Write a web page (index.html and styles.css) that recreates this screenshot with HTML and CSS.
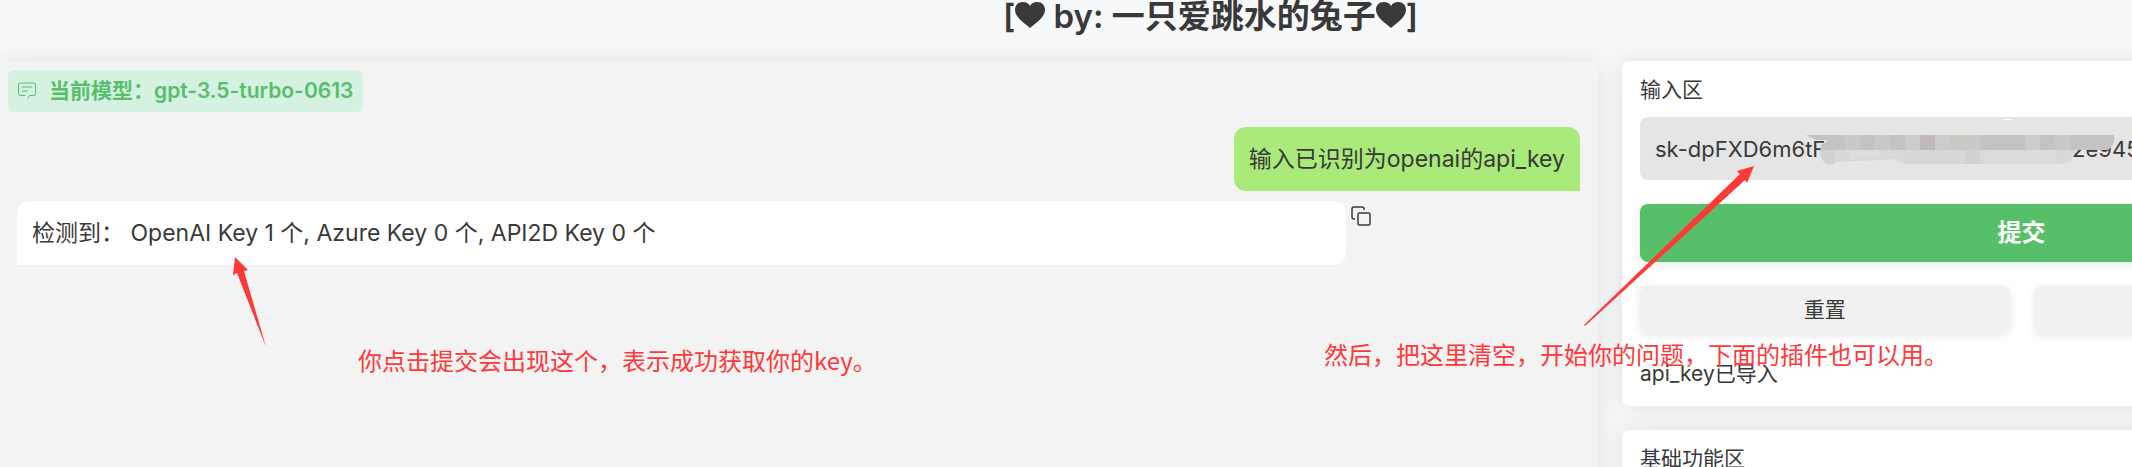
FILE: index.html
```html
<!DOCTYPE html>
<html lang="zh">
<head>
  <meta charset="UTF-8">
  <meta name="viewport" content="width=device-width, initial-scale=1.0">
  <title>by: 一只爱跳水的兔子</title>
  <link rel="stylesheet" href="styles.css">
</head>
<body>
  <div class="app">
    <h1>[<svg class="heart" viewBox="0 0 30 26" aria-hidden="true"><path d="M15 26C9 21 0 15 0 8C0 3 3 0 8 0C11 0 13.500 1 15 4C16.500 1 19 0 22 0C27 0 30 3 30 8C30 15 21 21 15 26Z"/></svg> by: 一只爱跳水的兔子<svg class="heart" viewBox="0 0 30 26" aria-hidden="true"><path d="M15 26C9 21 0 15 0 8C0 3 3 0 8 0C11 0 13.500 1 15 4C16.500 1 19 0 22 0C27 0 30 3 30 8C30 15 21 21 15 26Z"/></svg>]</h1>

    <main class="layout">
      <section class="chat">
        <div class="chat-label">
          <svg class="chat-icon" viewBox="0 0 18 18" aria-hidden="true"><path d="M10 16.500L11.500 13.500H15.500Q17.500 13.500 17.500 11.500V3Q17.500 1 15.500 1H2.500Q.500 1 .500 3V11.500Q.500 13.500 2.500 13.500H7.500M4 5H14M4 9H10"/></svg>
          当前模型：gpt-3.5-turbo-0613
        </div>
        <div class="messages">
          <div class="message user-message">输入已识别为openai的api_key</div>
          <div class="bot-row">
            <div class="message bot-message">检测到： OpenAI Key 1 个, Azure Key 0 个, API2D Key 0 个</div>
            <button class="copy-button" aria-label="复制">
              <svg viewBox="0 0 20 20" aria-hidden="true"><rect x="7" y="7" width="12" height="12" rx="1.500"/><path d="M4 13H3Q1 13 1 11V3Q1 1 3 1H11Q13 1 13 3V4"/></svg>
            </button>
          </div>
        </div>
      </section>

      <aside class="sidebar">
        <section class="panel">
          <label class="panel-title" for="prompt">输入区</label>
          <div class="key-field">
            <input type="text" id="prompt" value="sk-dpFXD6m6tF0000000m00000000m2e945">
            <!-- Mosaic over the middle of the key -->
            <svg class="mosaic" viewBox="0 0 320 50" aria-hidden="true">
              <path fill="#c3c3c3" d="M6 18H122L122 33H20L22 27L27 25V23H16Z"/>
              <path fill="#c9c9c8" d="M45 18H60V33H45ZM75 18H90V33H75Z"/>
              <path fill="#c3c3c3" d="M120 18H314Q316 27 308 33H120Z"/>
              <path fill="#cbcdcd" d="M105 18H120V33H105ZM135 18H150V33H135ZM225 18H240V33H225Z"/>
              <path fill="#bfbab8" d="M120 18H135V33H120Z"/>
              <path fill="#c9c9c6" d="M150 18H180V33H150ZM255 18H270V33H255Z"/>
              <path fill="#d8d8d8" d="M20 33H276Q272 47 258 47H105Q100 46 98 42L37 45Q32 48 27 47Q20 43 20 33Z"/>
              <path fill="#d2d1d2" d="M20 33H35V47H27Q20 43 20 33ZM165 33H180V47H165Z"/>
              <path fill="#dcdcdc" d="M185 33H255V47H185ZM50 33H80V40L50 42Z"/>
              <path fill="#fff" d="M203 2H211V3H203Z"/>
            </svg>
          </div>
          <button class="submit">提交</button>
          <div class="button-row">
            <button>重置</button>
            <button>停止</button>
          </div>
          <p class="status">api_key已导入</p>
        </section>
        <section class="panel">
          <h2 class="panel-title">基础功能区</h2>
        </section>
      </aside>
    </main>

    <!-- Hints drawn over the page -->
    <svg class="arrow arrow-result" viewBox="0 0 33 90" aria-hidden="true"><path d="M2 0L15 13L11 14L33 90L4 16L0 18Z"/></svg>
    <p class="note note-result">你点击提交会出现这个，表示成功获取你的key。</p>
    <svg class="arrow arrow-input" viewBox="0 0 170 160" aria-hidden="true"><path d="M170 0L163 17L161 14L1 160L0 159L156 8L153 5Z"/></svg>
    <p class="note note-input">然后，把这里清空，开始你的问题，下面的插件也可以用。</p>
  </div>
</body>
</html>
```

FILE: styles.css
```css
/* Base styles */
* {
  box-sizing: border-box;
}

html {
  overflow: hidden;
}

body {
  margin: 0;
  background: #f6f8fa;
  color: #393939;
  font-family: Inter, "Noto Sans CJK SC", sans-serif;
  font-size: 21px;
  font-weight: 400;
  line-height: 30px;
}

/* Wider than the window, the side column runs off the right edge */
.app {
  position: relative;
  width: calc(100% + 289px);
}

h1 {
  height: 37px;
  margin: 0 0 24px;
  font-size: 33px;
  font-weight: 600;
  line-height: 32px;
  text-align: center;
}

.heart {
  width: 30px;
  height: 26px;
  fill: #393939;
}

.layout {
  display: grid;
  grid-template-columns: 2fr 1fr;
  gap: 24px;
}

/* Chat styles */
.chat {
  min-height: 480px;
  padding: 9px 18px 18px 8px;
  border-radius: 8px;
  background: #f3f3f3;
  box-shadow: 0 0 26px rgba(0, 0, 0, 0.1);
}

.chat-label {
  display: inline-flex;
  align-items: center;
  gap: 13px;
  height: 42px;
  padding: 0 10px;
  border-radius: 6px;
  background: #d5f1e2;
  color: #57bf6a;
  font-weight: 600;
}

.chat-icon {
  width: 18px;
  height: 18px;
  fill: none;
  stroke: #57bf6a;
}

.messages {
  display: flex;
  flex-direction: column;
  gap: 10px;
  padding: 15px 0 0 9px;
}

.message {
  padding: 16px 15px;
  border-radius: 12px;
  font-size: 23px;
  line-height: 32px;
}

.user-message {
  align-self: flex-end;
  border-bottom-right-radius: 0;
  background: #a9ea7a;
}

.bot-row {
  display: flex;
  align-items: flex-start;
  gap: 5px;
}

.bot-message {
  width: 85%;
  border-bottom-left-radius: 0;
  background: #fff;
}

.copy-button {
  margin-top: 5px;
  padding: 0;
  border: 0;
  background: none;
}

.copy-button svg {
  display: block;
  width: 20px;
  height: 20px;
  fill: none;
  stroke: #393939;
  stroke-width: 1.5;
}

/* Side column */
.sidebar {
  display: flex;
  flex-direction: column;
  gap: 24px;
}

.panel {
  padding: 14px 18px 17px;
  border-radius: 8px;
  background: #fff;
  box-shadow: 0 0 26px rgba(0, 0, 0, 0.1);
}

.panel-title {
  display: block;
  margin: 0;
  font-size: 21px;
  font-weight: 400;
}

.key-field {
  position: relative;
  margin: 12px 0 24px;
}

.mosaic {
  position: absolute;
  top: 0;
  left: 160px;
  width: 320px;
  height: 50px;
  overflow: visible;
}

input {
  display: block;
  width: 100%;
  height: 63px;
  padding: 0 15px;
  border: 0;
  border-radius: 8px;
  background: #e5e5e5;
  color: inherit;
  font: inherit;
  font-size: 22px;
}

.panel button {
  height: 47px;
  border: 0;
  border-radius: 8px;
  background: #f1f1f1;
  color: inherit;
  font: inherit;
  box-shadow: 0 2px 8px rgba(0, 0, 0, 0.1);
}

.panel .submit {
  width: 100%;
  height: 58px;
  background: #57bf6a;
  color: #fff;
  font-size: 24px;
  font-weight: 700;
}

.button-row {
  display: grid;
  grid-template-columns: 1fr 1fr;
  gap: 24px;
  margin: 24px 0 26px;
}

.status {
  margin: 0;
}

/* Hints */
.note {
  position: absolute;
  margin: 0;
  color: #ff3838;
  font-family: "Noto Sans CJK SC", sans-serif;
  font-size: 24px;
  white-space: nowrap;
}

.note-result {
  top: 345px;
  left: 358px;
}

.note-input {
  top: 339px;
  left: 1324px;
}

.arrow {
  position: absolute;
  fill: #ff3838;
}

.arrow-result {
  top: 257px;
  left: 233px;
  width: 33px;
  height: 90px;
}

.arrow-input {
  top: 166px;
  left: 1584px;
  width: 170px;
  height: 160px;
}
```
